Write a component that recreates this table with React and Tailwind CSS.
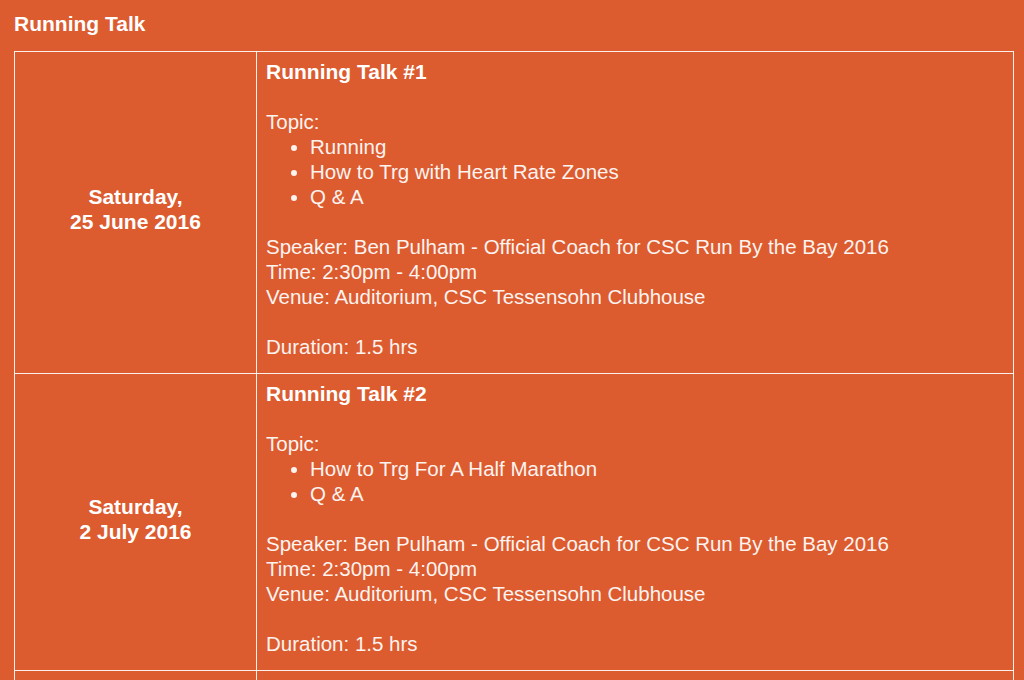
import React from "react";

const talks = [
  {
    date: ["Saturday,", "25 June 2016"],
    title: "Running Talk #1",
    topics: ["Running", "How to Trg with Heart Rate Zones", "Q & A"],
  },
  {
    date: ["Saturday,", "2 July 2016"],
    title: "Running Talk #2",
    topics: ["How to Trg For A Half Marathon", "Q & A"],
  },
];

const App = () => {
  return (
    <div
      className="min-h-screen bg-[#dc5b2f] text-white pl-[14px] pr-[10px] pt-[11px]"
      style={{ fontFamily: '"Liberation Sans", Arial, sans-serif' }}
    >
      <h1 className="text-[21px] leading-[26px] font-bold mb-[14px]">Running Talk</h1>
      <table className="w-[1000px] border-collapse text-[20.5px] leading-[25px]">
        <tbody>
          {talks.map((talk, index) => (
            <tr key={index}>
              <td className="w-[242px] border border-white/90 align-middle text-center text-[21px] font-bold pt-[7px] pb-[14px]">
                {talk.date[0]}
                <br />
                {talk.date[1]}
              </td>
              <td className="border border-white/90 align-top pl-[9px] pt-[7px] pb-[14px] text-[#fdf3ef]">
                <p className="font-bold text-[21px] text-white">{talk.title}</p>
                <p>&nbsp;</p>
                <p>Topic:</p>
                <ul className="list-disc pl-[44px]">
                  {talk.topics.map((t) => (
                    <li key={t}>{t}</li>
                  ))}
                </ul>
                <p>&nbsp;</p>
                <p>Speaker: Ben Pulham - Official Coach for CSC Run By the Bay 2016</p>
                <p>Time: 2:30pm - 4:00pm</p>
                <p>Venue: Auditorium, CSC Tessensohn Clubhouse</p>
                <p>&nbsp;</p>
                <p>Duration: 1.5 hrs</p>
              </td>
            </tr>
          ))}
          <tr>
            <td className="h-[40px] border border-white/90"></td>
            <td className="h-[40px] border border-white/90"></td>
          </tr>
        </tbody>
      </table>
    </div>
  );
};

export default App;
